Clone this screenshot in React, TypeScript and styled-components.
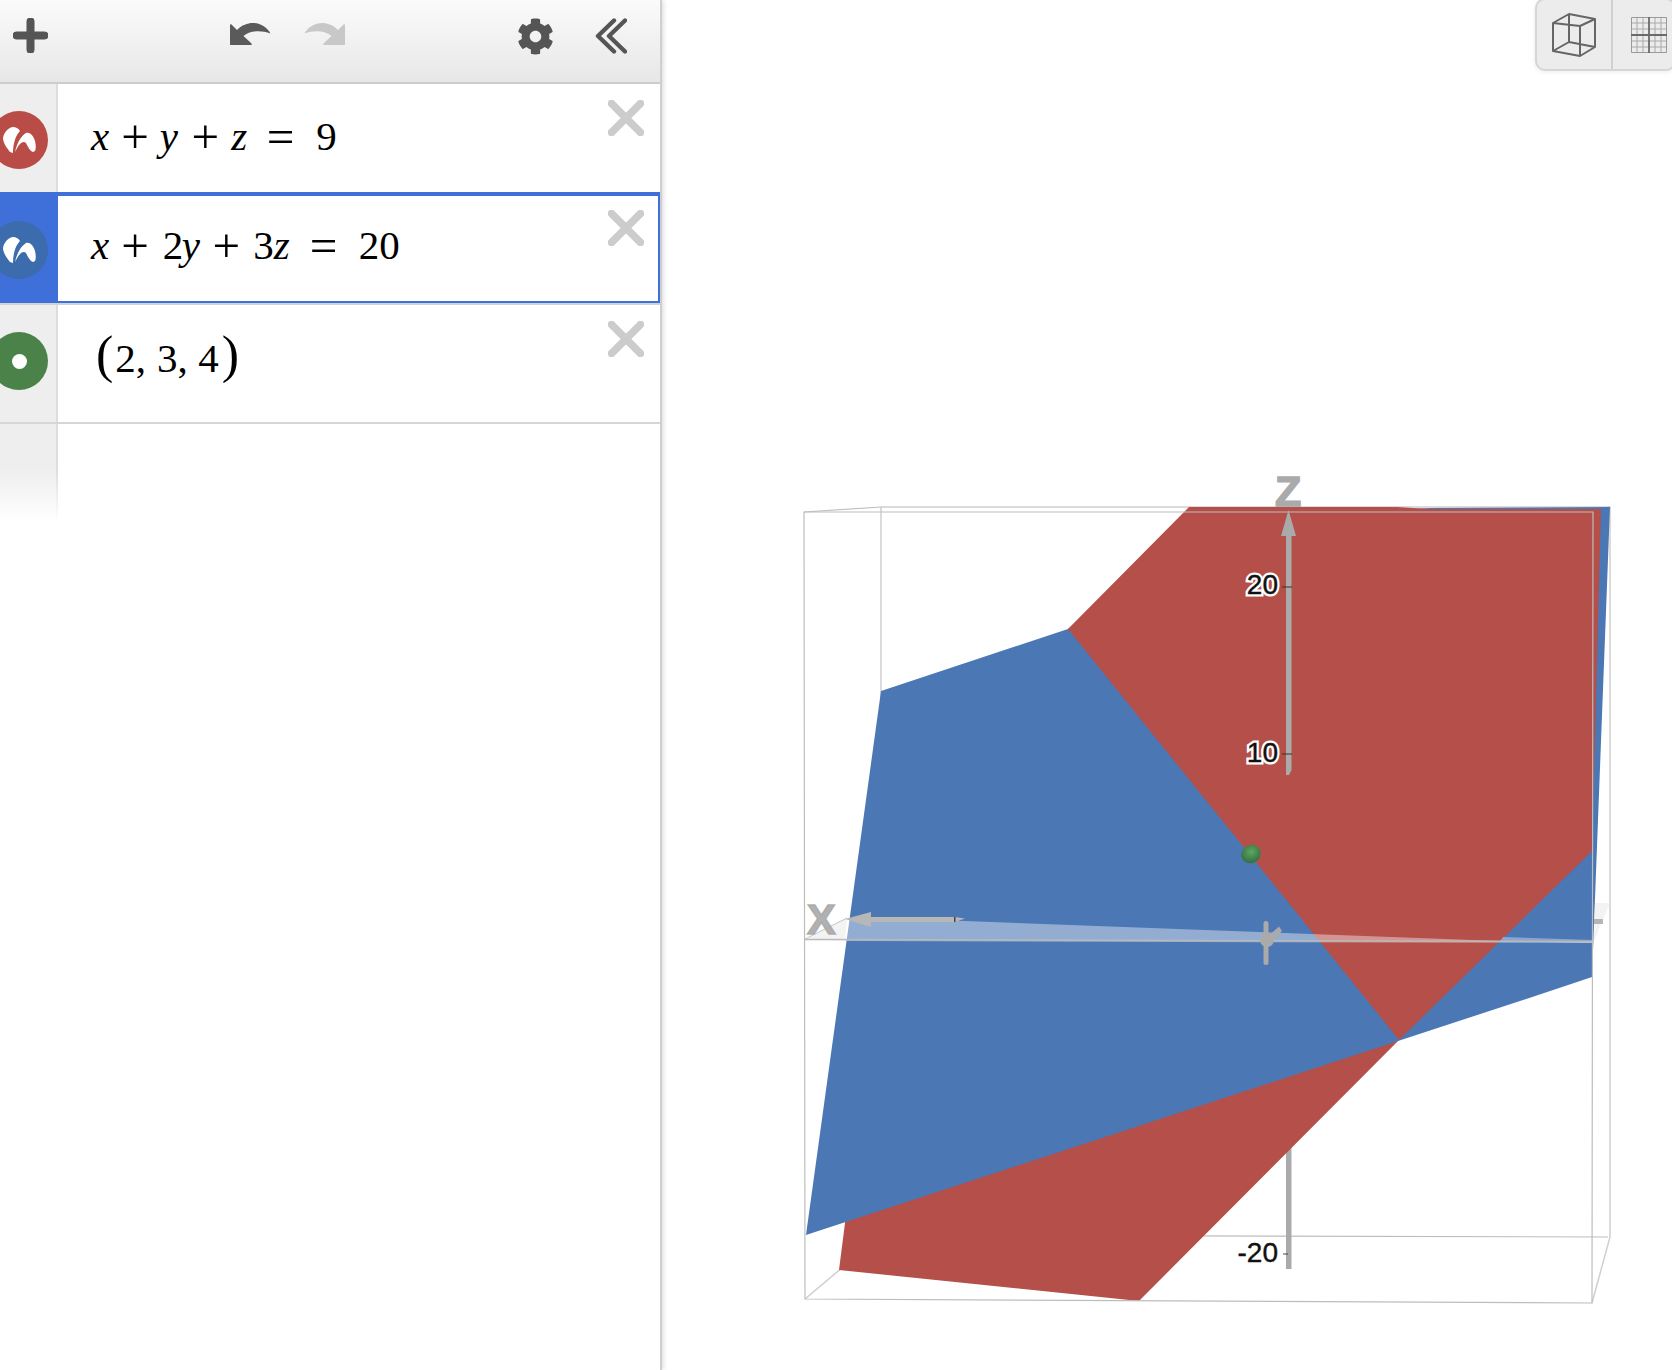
import React from "react"
import styled, { createGlobalStyle } from "styled-components"
import { FaCog } from "react-icons/fa"

const RED = "#b44f49"
const BLUE = "#4c77b5"
const AXIS = "#aaaaaa"
const BOX = "#bdbdbd"

const GlobalStyle = createGlobalStyle`
    html, body {
        margin: 0;
        height: 100%;
        background: #fff;
        overflow: hidden;
    }
    #root {
        height: 100%;
    }
`

function Plus() {
    return (
        <PlusIcon viewBox="0 0 35 35">
            <path d="M17.5 3.5V31.5M3.5 17.5H31.5" stroke="#555" strokeWidth="8" strokeLinecap="round" fill="none" />
        </PlusIcon>
    )
}

function Arrow({ flip, color }: { flip?: boolean; color: string }) {
    return (
        <ArrowIcon viewBox="0 0 42 24" $flip={flip}>
            <path
                d="M1 4.5V23.5C1 24 1.5 24 2 24H22C23 24 23 23 22 22L14.5 15C20 10 31 8.500 41.500 12.500C36 2 20 -3 8 9L2.500 3.500C1.500 3 1 3.500 1 4.500Z"
                fill={color}
            />
        </ArrowIcon>
    )
}

function Chevrons() {
    return (
        <ChevronIcon viewBox="0 0 32 36">
            <path d="M19 2.500L3 18L19 33.500M30 2.500L14 18L30 33.500" stroke="#555" strokeWidth="4.400" strokeLinecap="round" strokeLinejoin="round" fill="none" />
        </ChevronIcon>
    )
}

function Close({ selected }: { selected?: boolean }) {
    return (
        <CloseIcon viewBox="0 0 36 36" $selected={selected}>
            <path d="M3.500 3.500L32.500 32.500M32.500 3.500L3.500 32.500" stroke="#cccccc" strokeWidth="7.500" strokeLinecap="round" />
        </CloseIcon>
    )
}

function PlaneBadge({ color }: { color: string }) {
    return (
        <Badge $color={color}>
            <svg width="58" height="58" viewBox="-10 6 58 58">
                <path d="M3 33C4 27 9 22 13 22C16 22 18 23 20 26C16 30 13 38 13 48L10 47C7 43 3 38 3 33Z" fill="#fff" />
                <path d="M15 47C17 38 21 31 26 28C30 27 33 30 35 36C36 40 36 44 35 46L33 47C30 46 28 42 26 38C24 36 22 37 20 39C18 41 16 45 14 49Z" fill="#fff" />
            </svg>
        </Badge>
    )
}

function PointBadge({ color }: { color: string }) {
    return (
        <Badge $color={color}>
            <PointDot />
        </Badge>
    )
}

function CubeIcon() {
    return (
        <svg width="44" height="44" viewBox="-1 -1 44 44">
            <path
                d="M16 0L42 5L27 12L0 9ZM0 9V37L27 42V12M42 5V33L27 42M16 0V28L0 37M16 28L42 33"
                fill="none"
                stroke="#666"
                strokeWidth="2"
                strokeLinejoin="round"
            />
        </svg>
    )
}

function GridIcon() {
    return (
        <svg width="36" height="36" viewBox="0 0 36 36">
            <path d="M6 0V36M12 0V36M24 0V36M30 0V36M0 6H36M0 12H36M0 24H36M0 30H36" stroke="#aaa" strokeWidth="1" />
            <path d="M.5 .5H35.500V35.500H.5Z" stroke="#999" strokeWidth="1" fill="none" />
            <path d="M18 0V36M0 18H36" stroke="#6a6a6a" strokeWidth="1.800" />
        </svg>
    )
}

function Plot() {
    return (
        <PlotSvg viewBox="662 0 1010 1370" preserveAspectRatio="none">
            <defs>
                <radialGradient id="ball" cx="55%" cy="40%" r="65%">
                    <stop offset="0%" stopColor="#5ea565" />
                    <stop offset="100%" stopColor="#2f6d3a" />
                </radialGradient>
            </defs>

            {/* back of the box */}
            <g fill="none" stroke={BOX} strokeWidth="1.200">
                <path d="M881 507H1610V1237L1592 1303" stroke="#cfcfcf" strokeWidth="1.500" />
                <path d="M881 507V1235L805 1299" stroke="#cfcfcf" strokeWidth="1.500" />
                <path d="M881 1235L1608 1237" />
                <path d="M804 512L881 507M1593 512L1610 507" />
            </g>

            {/* lower axis goes behind the red plane */}
            <rect x="1286" y="1130" width="5.500" height="139" fill={AXIS} />
            <path d="M1283 1254H1288" stroke="#444" strokeWidth="1" />

            <polygon points="1400,1039 1300,1040 845,1200 845,1223 839,1270 1139,1301" fill={RED} />
            <polygon points="881,691 1068,629 1200,520 1430,508 1610,507 1598,820 1592,977 1523,1000 806,1235" fill={BLUE} />
            <polygon points="1189,507 1397,507 1430,509 1601,509 1592,851 1399,1040 1068,629" fill={RED} />

            {/* z=0 plane */}
            <polygon points="805,939 847,918 845,940" fill="#f3f3f3" />
            <polygon points="1595,903 1610,903 1594,941" fill="#f3f3f3" />
            <rect x="1594" y="919" width="9" height="5" fill="#b5b5b5" />
            <polygon points="847,918 965,921 1500,941 1593,941 1593,943 847,941" fill="#fff" fillOpacity="0.4" />
            <polygon points="1503,937 1593,940 1593,943 1500,941" fill="#fff" fillOpacity="0.35" />
            <path d="M805 939.500L1593 941.500" stroke="#b9b9b9" strokeWidth="1.500" />
            <path d="M805 939L847 918" stroke="#c4c4c4" strokeWidth="1" />

            {/* front of the box */}
            <g fill="none" stroke={BOX} strokeWidth="1.200">
                <path d="M804 512H1593L1592 1303L805 1299Z" />
            </g>

            {/* x axis */}
            <polygon points="845,919 871,912 871,917 955,917 965,918.500 955,922 871,922 871,927" fill="#b7b7b7" />
            <rect x="954" y="917" width="1.500" height="5" fill="#444" />

            {/* y axis end on */}
            <g fill={AXIS} stroke="none">
                <rect x="1263.500" y="921" width="5" height="44" rx="2.500" />
                <circle cx="1267" cy="940" r="7" />
                <path d="M1266 938L1279 926.500L1282 931L1270 944Z" />
            </g>

            {/* z axis */}
            <polygon points="1288.500,510 1296,536 1291.500,536 1291.500,770 1289,775 1286,775 1286,536 1281,536" fill={AXIS} />
            <path d="M1282 587H1292M1282 754H1292" stroke="#333" strokeWidth="1" />

            <ellipse cx="1251" cy="854" rx="10" ry="9" fill="url(#ball)" transform="rotate(-25 1251 854)" />

            <AxisName x="1275" y="506">Z</AxisName>
            <AxisName x="807" y="934" fillOpacity="0.92" strokeOpacity="0.92">X</AxisName>
            <TickHalo x="1278" y="594">20</TickHalo>
            <TickPlain x="1278" y="594">20</TickPlain>
            <TickHalo x="1278" y="762">10</TickHalo>
            <TickPlain x="1278" y="762">10</TickPlain>
            <TickPlain x="1278" y="1262">-20</TickPlain>
        </PlotSvg>
    )
}

export default function App() {
    return (
        <>
            <GlobalStyle />
            <Page>
                <Panel>
                    <Toolbar>
                        <ToolSlot $gap={13}><Plus /></ToolSlot>
                        <ToolSlot $gap={181}><Arrow color="#5a5a5a" /></ToolSlot>
                        <ToolSlot $gap={33}><Arrow flip color="#c8c8c8" /></ToolSlot>
                        <ToolSlot $gap={171}><FaCog size={37} color="#555" /></ToolSlot>
                        <ToolSlot $gap={41}><Chevrons /></ToolSlot>
                    </Toolbar>

                    <Row $height={108}>
                        <Gutter><PlaneBadge color="#b94c46" /></Gutter>
                        <Expression>
                            <MathLine $top={28}>
                                <Var>x</Var><Op $left={12}>+</Op><Var $left={11}>y</Var><Op $left={13.5}>+</Op><Var $left={12}>z</Var>
                                <Op $left={19.5}>=</Op><Num $left={22}>9</Num>
                            </MathLine>
                            <Close />
                        </Expression>
                    </Row>

                    <Row $height={113} $selected>
                        <Gutter $selected><PlaneBadge color="#3c6cad" /></Gutter>
                        <Expression $selected>
                            <MathLine $top={25}>
                                <Var>x</Var><Op $left={12}>+</Op><Num $left={14}>2</Num><Var $left={-1.5}>y</Var><Op $left={12.5}>+</Op><Num $left={13}>3</Num><Var $left={0}>z</Var>
                                <Op $left={20}>=</Op><Num $left={21.5}>20</Num>
                            </MathLine>
                            <Close selected />
                        </Expression>
                    </Row>

                    <Row $height={119} $ruled>
                        <Gutter><PointBadge color="#4a8249" /></Gutter>
                        <Expression>
                            <MathLine $top={28}>
                                <Paren $left={5}>(</Paren><Num $left={2}>2</Num><Num>,</Num><Num $left={11}>3</Num><Num>,</Num><Num $left={10.5}>4</Num><Paren $left={3}>)</Paren>
                            </MathLine>
                            <Close />
                        </Expression>
                    </Row>

                    <EmptyGutter />
                </Panel>

                <GraphPane>
                    <Plot />
                    <ViewSwitch>
                        <ViewButton $width={74}><CubeIcon /></ViewButton>
                        <ViewButton $width={63} $divided $pad={18}><GridIcon /></ViewButton>
                    </ViewSwitch>
                </GraphPane>
            </Page>
        </>
    )
}

const Page = styled.div`
    display: flex;
    width: 100%;
    height: 100%;
`
const Panel = styled.aside`
    flex: 0 0 662px;
    box-sizing: border-box;
    display: flex;
    flex-direction: column;
    border-right: 2px solid #cfcfcf;
    box-shadow: 1px 0 5px rgba(0, 0, 0, 0.16);
    background: #fff;
    z-index: 2;
`
const Toolbar = styled.header`
    flex: 0 0 84px;
    box-sizing: border-box;
    display: flex;
    align-items: flex-start;
    padding-top: 18px;
    background: linear-gradient(#fbfbfb, #e7e7e7);
    border-bottom: 2px solid #cccccc;
`
const ToolSlot = styled.div<{ $gap: number }>`
    display: flex;
    margin-left: ${(p) => p.$gap}px;
`
const PlusIcon = styled.svg`
    width: 35px;
    height: 35px;
`
const ArrowIcon = styled.svg<{ $flip?: boolean }>`
    width: 42px;
    height: 24px;
    margin-top: 3px;
    transform: ${(p) => (p.$flip ? "scaleX(-1)" : "none")};
`
const ChevronIcon = styled.svg`
    width: 32px;
    height: 36px;
`
const CloseIcon = styled.svg<{ $selected?: boolean }>`
    flex: 0 0 36px;
    height: 36px;
    margin: ${(p) => (p.$selected ? "14px 14px 0 0" : "16px 16px 0 0")};
`
const Row = styled.section<{ $height: number; $selected?: boolean; $ruled?: boolean }>`
    flex: 0 0 ${(p) => p.$height}px;
    box-sizing: border-box;
    display: flex;
    border-bottom: ${(p) => (p.$ruled ? "2px solid #d6d6d6" : "none")};
    ${(p) => (p.$selected ? "border-bottom: 2px solid #ccd4d6;" : "")}
`
const Gutter = styled.div<{ $selected?: boolean }>`
    flex: 0 0 58px;
    box-sizing: border-box;
    padding-top: ${(p) => (p.$selected ? 29 : 27)}px;
    background: ${(p) => (p.$selected ? "#3f6fd8" : "#eeeeee")};
    border-right: ${(p) => (p.$selected ? "none" : "2px solid #dddddd")};
`
const Badge = styled.div<{ $color: string }>`
    width: 58px;
    height: 58px;
    margin-left: -10px;
    border-radius: 50%;
    display: flex;
    align-items: center;
    justify-content: center;
    background: ${(p) => p.$color};
`
const PointDot = styled.div`
    width: 15px;
    height: 15px;
    border-radius: 50%;
    background: #fff;
`
const Expression = styled.div<{ $selected?: boolean }>`
    flex: 1;
    box-sizing: border-box;
    display: flex;
    justify-content: space-between;
    align-items: flex-start;
    background: #fff;
    ${(p) =>
        p.$selected
            ? "border-top: 4px solid #3f6fd8; border-bottom: 2px solid #3f6fd8; border-right: 2px solid #3f6fd8;"
            : ""}
`
const MathLine = styled.div<{ $top: number }>`
    display: flex;
    align-items: baseline;
    padding: ${(p) => p.$top}px 0 0 33px;
    font-family: "Liberation Serif", "Times New Roman", serif;
    font-size: 41px;
    line-height: 44px;
    color: #000;
`
const Var = styled.span<{ $left?: number }>`
    font-style: italic;
    margin-left: ${(p) => p.$left ?? 0}px;
`
const Op = styled.span<{ $left?: number }>`
    font-size: 49px;
    line-height: 44px;
    margin-left: ${(p) => p.$left ?? 0}px;
    transform: translateY(3px);
`
const Num = styled.span<{ $left?: number }>`
    margin-left: ${(p) => p.$left ?? 0}px;
`
const Paren = styled.span<{ $left?: number }>`
    font-size: 52px;
    line-height: 44px;
    margin-left: ${(p) => p.$left ?? 0}px;
`
const EmptyGutter = styled.div`
    width: 58px;
    height: 99px;
    box-sizing: border-box;
    background: #eeeeee;
    border-right: 2px solid #dddddd;
    mask-image: linear-gradient(#000 45%, transparent);
    -webkit-mask-image: linear-gradient(#000 45%, transparent);
`
const GraphPane = styled.main`
    flex: 1;
    position: relative;
    overflow: hidden;
`
const PlotSvg = styled.svg`
    display: block;
    width: 100%;
    height: 100%;
`
const AxisName = styled.text`
    font-family: "Liberation Sans", Arial, sans-serif;
    font-size: 43px;
    font-weight: 700;
    fill: ${AXIS};
    stroke: ${AXIS};
    stroke-width: 1.5px;
`
const TickHalo = styled.text`
    font-family: "Liberation Sans", Arial, sans-serif;
    font-size: 28px;
    text-anchor: end;
    fill: #fff;
    stroke: #fff;
    stroke-width: 5px;
`
const TickPlain = styled.text`
    font-family: "Liberation Sans", Arial, sans-serif;
    font-size: 28px;
    text-anchor: end;
    fill: #111;
    stroke: #111;
    stroke-width: 0.4px;
`
const ViewSwitch = styled.div`
    position: absolute;
    top: -2px;
    right: -4px;
    height: 73px;
    box-sizing: border-box;
    display: flex;
    background: #ececec;
    border: 2px solid #d6d6d6;
    border-radius: 10px;
    box-shadow: 0 1px 5px rgba(0, 0, 0, 0.08);
`
const ViewButton = styled.div<{ $width: number; $divided?: boolean; $pad?: number }>`
    width: ${(p) => p.$width}px;
    box-sizing: border-box;
    display: flex;
    align-items: center;
    justify-content: ${(p) => (p.$pad ? "flex-start" : "center")};
    padding-left: ${(p) => p.$pad ?? 0}px;
    border-left: ${(p) => (p.$divided ? "2px solid #d0d0d0" : "none")};
`
